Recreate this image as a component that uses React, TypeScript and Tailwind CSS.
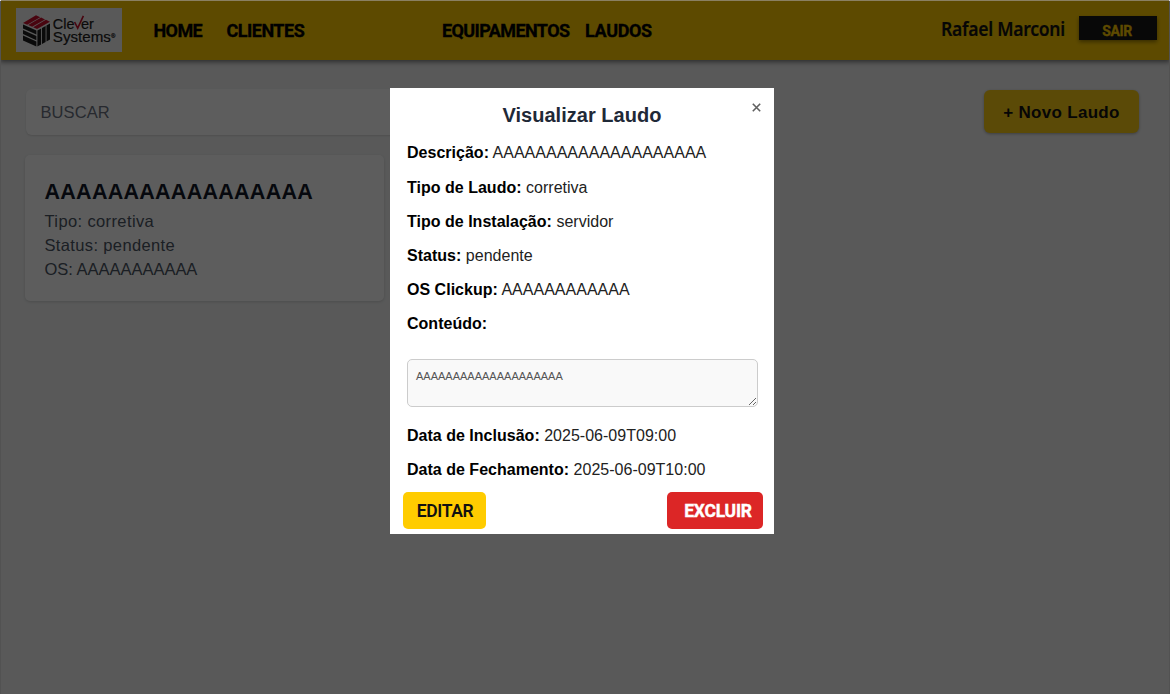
import React from 'react';

function Logo() {
  return (
    <div className="flex h-[44px] w-[106px] shrink-0 items-center bg-[#f4f4f4]">
      <svg width="106" height="44" viewBox="0 0 106 44">
        <g fill="#c8102e">
          <path d="M7 15 L20 7.3 L24.2 9.2 L11.2 16.7Z" />
          <path d="M12.1 17.1 L25.1 9.6 L29 11.4 L16.2 18.8Z" />
          <path d="M17.1 19.2 L29.9 11.8 L34 13.7 L21 21Z" />
        </g>
        <g fill="#1d1d1d">
          <path d="M7 16.5 L20.4 22.4 V26.6 L7 20.6Z" />
          <path d="M7 22 L20.4 28 V32.2 L7 26Z" />
          <path d="M7 27.4 L20.4 33.6 V38.6 L7 32.4Z" />
          <path d="M21.4 22.4 L25.1 20.4 V36.4 L21.4 38.6Z" />
          <path d="M26 20 L29.6 18 V34 L26 36Z" />
          <path d="M30.5 17.5 L34 15.5 V31.4 L30.5 33.5Z" />
        </g>
        <g fill="#1d1d1d" stroke="#1d1d1d" strokeWidth="0.2" fontFamily="Liberation Sans, Arial, sans-serif" fontSize="14.5">
          <text x="36.8" y="21" textLength="21.6" lengthAdjust="spacingAndGlyphs">Cle</text>
          <text x="65" y="21" textLength="13" lengthAdjust="spacingAndGlyphs">er</text>
          <text x="36.8" y="33.5" textLength="58" lengthAdjust="spacingAndGlyphs">Systems</text>
          <text x="95" y="30" fontSize="6">®</text>
        </g>
        <path d="M58.6 14 L61.7 20.2 L67.4 7.8" fill="none" stroke="#c8102e" strokeWidth="1.6" />
      </svg>
    </div>
  );
}

function Field({ label, value }: { label: string; value?: string }) {
  return (
    <p className="h-[34.15px] whitespace-pre text-[16px] leading-[24px] tracking-[0.015px] text-[#222]">
      <strong className="font-bold text-black">{label}</strong> {value}
    </p>
  );
}

function Modal() {
  return (
    <div className="fixed inset-x-0 bottom-0 top-px flex items-start justify-center bg-black/[0.635] pr-[6px] pt-[87px]">
      <section className="relative h-[446px] w-[384px] bg-white px-[17px] pt-[13px]">
        <button className="absolute right-[13px] top-[10px] flex h-[18px] w-[10px] items-center justify-center">
          <svg width="9" height="9" viewBox="0 0 9 9" stroke="#606060" strokeWidth="1.6">
            <path d="M0.8 0.8 L8.2 8.2 M8.2 0.8 L0.8 8.2" />
          </svg>
        </button>
        <h2 className="text-center text-[20px] font-bold leading-[28px] tracking-[0.03px] text-[#1f2937]">Visualizar Laudo</h2>
        <div className="h-[218px] pt-[12.4px]">
          <Field label="Descrição:" value="AAAAAAAAAAAAAAAAAAAA" />
          <Field label="Tipo de Laudo:" value="corretiva" />
          <Field label="Tipo de Instalação:" value="servidor" />
          <Field label="Status:" value="pendente" />
          <Field label="OS Clickup:" value="AAAAAAAAAAAA" />
          <Field label="Conteúdo:" />
        </div>
        <textarea
          readOnly
          defaultValue="AAAAAAAAAAAAAAAAAAAA"
          className="mt-[12px] block h-[48px] w-[351px] overflow-hidden rounded-[5px] border border-[#ccc] bg-[#f9f9f9] px-[8px] py-[8px] text-[11px] leading-[16px] text-[#555]"
        />
        <div className="h-[85px] pt-[17px]">
          <Field label="Data de Inclusão:" value="2025-06-09T09:00" />
          <Field label="Data de Fechamento:" value="2025-06-09T10:00" />
        </div>
        <div className="-ml-[4px] -mr-[6px] flex justify-between">
          <button className="h-[37px] w-[83px] rounded-[5px] bg-[#fc0] pl-px pt-[2px] font-[Roboto] text-[17.5px] font-semibold tracking-[-0.4px] text-[#111]">EDITAR</button>
          <button className="h-[37px] w-[96px] rounded-[5px] bg-[#dc2626] pl-[6px] pt-[2px] font-[Roboto] text-[17.5px] font-bold tracking-[-0.25px] text-white [-webkit-text-stroke:0.4px_white]">EXCLUIR</button>
        </div>
      </section>
    </div>
  );
}

export default function App() {
  return (
    <div className="h-[694px] w-[1170px] overflow-hidden border-x border-[#e0e0e0] bg-[#f3f4f4] font-['Liberation_Sans',Arial,sans-serif]">
      <header className="-mx-px flex h-[60px] items-start border-t border-[#8a8062] bg-[#fc0] pl-[16px] shadow-[0_2px_5px_rgba(0,0,0,0.5)]">
        <div className="pt-[7px]">
          <Logo />
        </div>
        <nav className="flex pl-[31.5px] pt-[18px] font-[Roboto] text-[18px] font-bold leading-[24px] text-black [-webkit-text-stroke:0.35px_black]">
          <a className="w-[73px] tracking-[-0.6px]">HOME</a>
          <a className="w-[215.5px] tracking-[-0.5px]">CLIENTES</a>
          <a className="w-[143px] tracking-[-0.6px]">EQUIPAMENTOS</a>
          <a className="tracking-[-0.35px]">LAUDOS</a>
        </nav>
        <div className="ml-auto flex pr-[13px]">
          <span className="w-[138px] pt-[16px] font-['Noto_Sans'] text-[19.5px] font-semibold leading-[24px] text-[#111]">
            <span className="inline-block origin-left scale-x-[0.9] whitespace-nowrap tracking-[-0.3px] [-webkit-text-stroke:0.2px_#111]">Rafael Marconi</span>
          </span>
          <button className="mt-[15px] h-[24px] w-[78px] bg-[#161616] pr-[2px] pt-[5px] font-[Roboto] text-[14px] font-bold leading-[20px] tracking-[-0.4px] text-[#fc0] shadow-[0_2px_4px_rgba(0,0,0,0.4)] [-webkit-text-stroke:0.3px_#fc0]">SAIR</button>
        </div>
      </header>
      <main className="pl-[23px] pr-[30px] pt-[29px]">
        <div className="flex justify-between">
          <input
            placeholder="BUSCAR"
            className="ml-[2px] h-[46px] w-[500px] rounded-[6px] bg-white px-[14.5px] text-[16.5px] tracking-[0.1px] shadow-[0_1px_2px_rgba(0,0,0,0.12)] placeholder:text-[#6b7280]"
          />
          <button className="mt-px h-[43px] w-[155px] rounded-[6px] bg-[#facc15] pt-[2px] text-[17px] font-bold tracking-[0.3px] text-[#111] shadow-[0_1px_3px_rgba(0,0,0,0.3)]">+ Novo Laudo</button>
        </div>
        <article className="ml-px mt-[20px] h-[146px] w-[359px] rounded-[5px] bg-white pl-[19.5px] pt-[21px] shadow-[0_1px_3px_rgba(0,0,0,0.15)]">
          <h3 className="text-[21.5px] font-bold leading-[32px] tracking-[0.27px] text-[#111827]">AAAAAAAAAAAAAAAAA</h3>
          <div className="pt-px text-[16.5px] leading-[24.2px] text-[#4b5563]">
            <p className="tracking-[0.38px]">Tipo: corretiva</p>
            <p className="tracking-[0.36px]">Status: pendente</p>
            <p className="tracking-[-0.02px]">OS: AAAAAAAAAAA</p>
          </div>
        </article>
      </main>
      <Modal />
    </div>
  );
}
